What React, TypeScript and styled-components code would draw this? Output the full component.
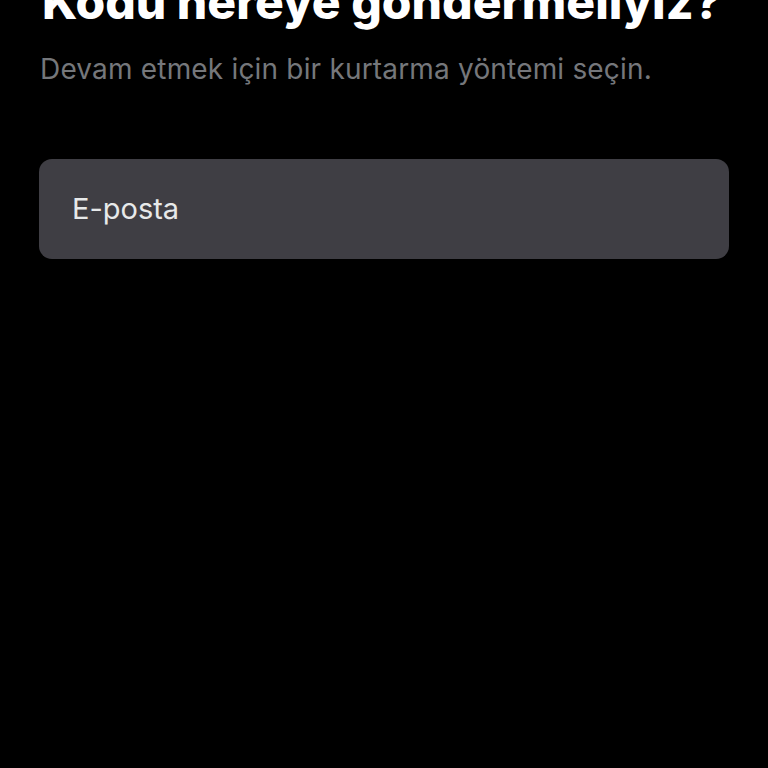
import React from "react";
import styled, { createGlobalStyle } from "styled-components";

const Global = createGlobalStyle`
  html, body { margin: 0; padding: 0; background: #000; }
  body { font-family: Inter, "Noto Sans", Arial, sans-serif; -webkit-font-smoothing: antialiased; }
  #root { min-height: 768px; background: #000; overflow: hidden; }
`;

const Page = styled.div`
  display: flex;
  flex-direction: column;
  padding: 0 39px 0 39px;
  height: 768px;
  overflow: hidden;
`;

const Title = styled.h1`
  margin: -22px 0 0 3px;
  font-size: 48px;
  line-height: 48px;
  font-weight: 800;
  color: #ffffff;
  white-space: nowrap;
  letter-spacing: 0px;
`;

const Subtitle = styled.p`
  margin: 25px 0 0 1px;
  font-size: 28px;
  line-height: 36px;
  font-weight: 400;
  color: #75777b;
  white-space: nowrap;
  letter-spacing: 0.18px;
`;

const Options = styled.div`
  display: flex;
  flex-direction: column;
  gap: 16px;
  margin-top: 72px;
`;

const Option = styled.button`
  display: flex;
  align-items: center;
  height: 100px;
  padding: 0 33px;
  border: none;
  border-radius: 13px;
  background: #3f3e44;
  color: #e7e9ea;
  font-family: inherit;
  font-size: 29px;
  line-height: 36px;
  font-weight: 400;
  text-align: left;
  cursor: pointer;
`;

export default function App() {
  return (
    <>
      <Global />
      <Page>
        <Title>Kodu nereye göndermeliyiz?</Title>
        <Subtitle>Devam etmek için bir kurtarma yöntemi seçin.</Subtitle>
        <Options>
          <Option>E-posta</Option>
        </Options>
      </Page>
    </>
  );
}
